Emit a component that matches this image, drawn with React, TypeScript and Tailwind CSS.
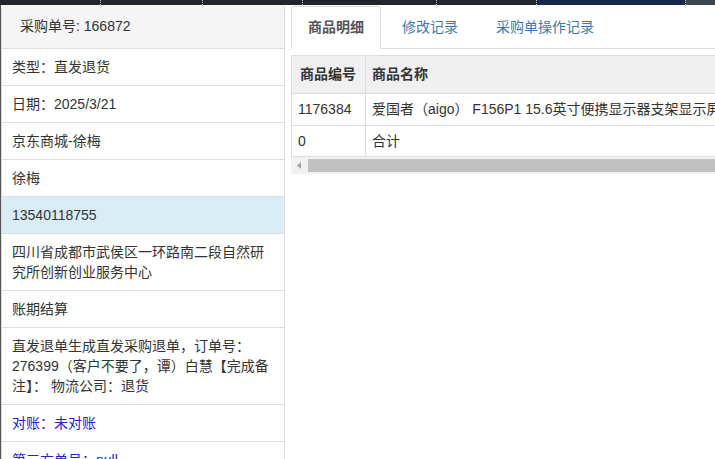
import React from "react";

const topSegments = [
  { w: "w-[101px]", bg: "bg-[#22262b]" },
  { w: "w-[102px]", bg: "bg-[#22262b]" },
  { w: "w-[100px]", bg: "bg-[#22262b]" },
  { w: "w-[134px]", bg: "bg-[#22262b]" },
  { w: "w-[100px]", bg: "bg-[#22262b]" },
  { w: "w-[149px]", bg: "bg-[#15284a]" },
];

type InfoRow = { text: string; tone?: "info" | "link" };

const rows: InfoRow[] = [
  { text: "类型：直发退货" },
  { text: "日期：2025/3/21" },
  { text: "京东商城-徐梅" },
  { text: "徐梅" },
  { text: "13540118755", tone: "info" },
  { text: "四川省成都市武侯区一环路南二段自然研究所创新创业服务中心" },
  { text: "账期结算" },
  { text: "直发退单生成直发采购退单，订单号：276399（客户不要了，谭）白慧【完成备注】： 物流公司：退货" },
  { text: "对账：未对账", tone: "link" },
  { text: "第三方单号：null", tone: "link" },
];

const tabs = ["商品明细", "修改记录", "采购单操作记录"];

export default function App() {
  return (
    <div className="h-[459px] w-[715px] overflow-hidden bg-white text-[14px] text-[#333] font-['Liberation_Sans','Noto_Sans_CJK_SC',sans-serif]">
      <div className="flex h-[5px]">
        {topSegments.map((s, i) => (
          <div key={i} className={`${s.w} ${s.bg} border-r border-dotted border-white/70`} />
        ))}
        <div className="flex-1 bg-[#3c4650]" />
      </div>

      <div className="flex border-l border-[#555]">
        {/* left info panel */}
        <div className="w-[284px] shrink-0 rounded-t-[4px] border border-t-0 border-[#ddd]">
          <div className="h-[44px] flex items-center pl-[18px] bg-[#f5f5f5] rounded-t-[4px] border-b border-[#ddd]">
            采购单号: 166872
          </div>
          {rows.map((r, i) => (
            <div
              key={i}
              className={`py-[8px] pl-[10px] pr-[12px] leading-[20px] border-b border-[#ddd] ${
                r.tone === "info" ? "bg-[#d9edf7]" : ""
              } ${r.tone === "link" ? "text-[#2424c8]" : ""}`}
            >
              {r.text}
            </div>
          ))}
        </div>

        {/* right detail area */}
        <div className="flex-1 min-w-0 overflow-hidden pl-[6px] pt-[1px]">
          <div className="flex border-b border-[#ddd] h-[43px]">
            {tabs.map((t, i) =>
              i === 0 ? (
                <div
                  key={t}
                  className="-mb-px mr-[5px] px-[16px] flex items-center rounded-t-[4px] border border-[#ddd] border-b-white bg-white font-bold text-[#555]"
                >
                  {t}
                </div>
              ) : (
                <div key={t} className="mr-[6px] px-[15px] flex items-center border border-transparent text-[#3c78ad]">
                  {t}
                </div>
              )
            )}
          </div>

          <div className="mt-[6px] w-[900px]">
            <table className="border-collapse text-left">
              <thead>
                <tr className="bg-[#f0f0f0] h-[38px]">
                  <th className="w-[74px] border border-[#ddd] px-[8px] font-bold">商品编号</th>
                  <th className="w-[800px] border border-[#ddd] px-[6px] font-bold">商品名称</th>
                </tr>
              </thead>
              <tbody>
                <tr className="h-[32px]">
                  <td className="border border-[#ddd] px-[6px]">1176384</td>
                  <td className="border border-[#ddd] px-[6px] whitespace-nowrap">
                    爱国者（aigo） F156P1 15.6英寸便携显示器支架显示屏一体机
                  </td>
                </tr>
                <tr className="h-[31px]">
                  <td className="border border-[#ddd] px-[6px]">0</td>
                  <td className="border border-[#ddd] px-[6px]">合计</td>
                </tr>
              </tbody>
            </table>
            <div className="flex h-[17px] bg-[#f1f1f1]">
              <div className="w-[17px] flex items-center justify-center">
                <svg width="5" height="7" viewBox="0 0 5 7">
                  <path d="M4 0 L0 3.5 L4 7 Z" fill="#a3a3a3" />
                </svg>
              </div>
              <div className="flex-1 my-[2px] bg-[#c1c1c1]" />
            </div>
          </div>
        </div>
      </div>
    </div>
  );
}
